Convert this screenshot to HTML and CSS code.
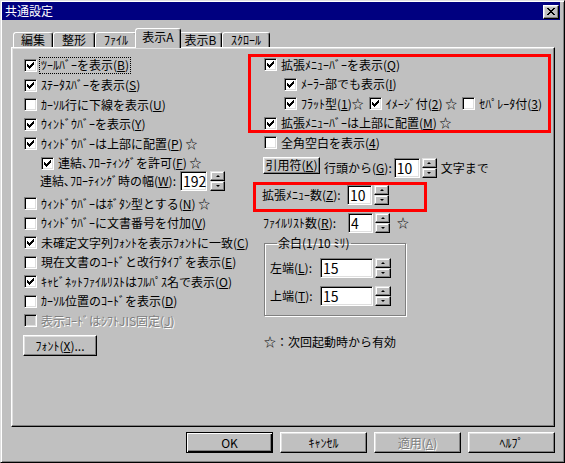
FILE: index.html
```html
<!DOCTYPE html>
<html lang="ja">

<head>
    <meta charset="UTF-8">
    <meta name="viewport" content="width=device-width, initial-scale=1.0">
    <title>共通設定</title>
    <link rel="stylesheet" href="styles.css">
</head>

<body>
    <svg class="defs">
        <symbol id="chk" viewBox="0 0 7 7">
            <path d="M0 2H1V3H2V4H3V3H4V2H5V1H6V0H7V3H6V4H5V5H4V6H3V7H2V6H1V5H0Z" />
        </symbol>
    </svg>
    <div class="dlg">
        <div class="title">
            <span>共通設定</span>
            <span class="close">
                <svg width="8" height="7" viewBox="0 0 8 7">
                    <path d="M0 0h2v1H0z M6 0h2v1H6z M1 1h2v1H1z M5 1h2v1H5z M2 2h4v1H2z M3 3h2v1H3z M2 4h4v1H2z M1 5h2v1H1z M5 5h2v1H5z M0 6h2v1H0z M6 6h2v1H6z" />
                </svg>
            </span>
        </div>

        <ul class="tabs">
            <li class="t1">編集</li>
            <li>整形</li>
            <li>ﾌｧｲﾙ</li>
            <li class="on">表示A</li>
            <li class="t5">表示B</li>
            <li class="t6">ｽｸﾛｰﾙ</li>
        </ul>

        <div class="panel">
            <!-- 左側 -->
            <div class="col-l">
                <div class="row"><span class="cb"><svg><use href="#chk" /></svg></span><span class="lbl focus">ﾂｰﾙﾊﾞｰを表示(<u>B</u>)</span></div>
                <div class="row"><span class="cb"><svg><use href="#chk" /></svg></span><span class="lbl">ｽﾃｰﾀｽﾊﾞｰを表示(<u>S</u>)</span></div>
                <div class="row"><span class="cb"></span><span class="lbl">ｶｰｿﾙ行に下線を表示(<u>U</u>)</span></div>
                <div class="row"><span class="cb"><svg><use href="#chk" /></svg></span><span class="lbl">ｳｨﾝﾄﾞｳﾊﾞｰを表示(<u>Y</u>)</span></div>
                <div class="row"><span class="cb"><svg><use href="#chk" /></svg></span><span class="lbl">ｳｨﾝﾄﾞｳﾊﾞｰは上部に配置(<u>P</u>) ☆</span></div>
                <div class="row ind"><span class="cb"><svg><use href="#chk" /></svg></span><span class="lbl">連結､ﾌﾛｰﾃｨﾝｸﾞを許可(<u>F</u>) ☆</span></div>
                <div class="wrow">
                    <span class="w-lbl">連結､ﾌﾛｰﾃｨﾝｸﾞ時の幅(<u>W</u>):</span>
                    <span class="edit e27">192</span>
                    <span class="spin"><i class="up"></i><i class="dn"></i></span>
                </div>
                <div class="row"><span class="cb"></span><span class="lbl">ｳｨﾝﾄﾞｳﾊﾞｰはﾎﾞﾀﾝ型とする(<u>N</u>) ☆</span></div>
                <div class="row"><span class="cb"></span><span class="lbl">ｳｨﾝﾄﾞｳﾊﾞｰに文書番号を付加(<u>V</u>)</span></div>
                <div class="row"><span class="cb"><svg><use href="#chk" /></svg></span><span class="lbl">未確定文字列ﾌｫﾝﾄを表示ﾌｫﾝﾄに一致(<u>C</u>)</span></div>
                <div class="row"><span class="cb"></span><span class="lbl">現在文書のｺｰﾄﾞと改行ﾀｲﾌﾟを表示(<u>E</u>)</span></div>
                <div class="row"><span class="cb"><svg><use href="#chk" /></svg></span><span class="lbl">ｷｬﾋﾞﾈｯﾄﾌｧｲﾙﾘｽﾄはﾌﾙﾊﾟｽ名で表示(<u>O</u>)</span></div>
                <div class="row"><span class="cb"></span><span class="lbl">ｶｰｿﾙ位置のｺｰﾄﾞを表示(<u>D</u>)</span></div>
                <div class="row"><span class="cb dis"></span><span class="lbl gray">表示ｺｰﾄﾞはｼﾌﾄJIS固定(<u>J</u>)</span></div>
                <div class="btn font-btn">ﾌｫﾝﾄ(<u>X</u>)...</div>
            </div>

            <!-- 右側 -->
            <div class="col-r">
                <div class="red red1">
                    <div class="red-in">
                        <div class="row"><span class="cb"><svg><use href="#chk" /></svg></span><span class="lbl">拡張ﾒﾆｭｰﾊﾞｰを表示(<u>Q</u>)</span></div>
                        <div class="row ind2"><span class="cb"><svg><use href="#chk" /></svg></span><span class="lbl">ﾒｰﾗｰ部でも表示(<u>I</u>)</span></div>
                        <div class="row ind2">
                            <span class="cb"><svg><use href="#chk" /></svg></span><span class="lbl sp">ﾌﾗｯﾄ型(<u>1</u>)☆</span>
                            <span class="cb"><svg><use href="#chk" /></svg></span><span class="lbl sp">ｲﾒｰｼﾞ付(<u>2</u>) ☆</span>
                            <span class="cb"></span><span class="lbl">ｾﾊﾟﾚｰﾀ付(<u>3</u>)</span>
                        </div>
                        <div class="row"><span class="cb"><svg><use href="#chk" /></svg></span><span class="lbl">拡張ﾒﾆｭｰﾊﾞｰは上部に配置(<u>M</u>) ☆</span></div>
                    </div>
                </div>

                <div class="row sub"><span class="cb"></span><span class="lbl">全角空白を表示(<u>4</u>)</span></div>

                <div class="qrow sub">
                    <span class="btn q-btn">引用符(<u>K</u>)</span>
                    <span class="q-lbl">行頭から(<u>G</u>):</span>
                    <span class="edit e26">10</span>
                    <span class="spin"><i class="up"></i><i class="dn"></i></span>
                    <span class="q-end">文字まで</span>
                </div>

                <div class="red red2">
                    <div class="nrow">
                        <span class="n-lbl">拡張ﾒﾆｭｰ数(<u>Z</u>):</span>
                        <span class="edit e25">10</span>
                        <span class="spin"><i class="up"></i><i class="dn"></i></span>
                    </div>
                </div>

                <div class="nrow sub frow">
                    <span class="n-lbl">ﾌｧｲﾙﾘｽﾄ数(<u>R</u>):</span>
                    <span class="edit e25">4</span>
                    <span class="spin"><i class="up"></i><i class="dn"></i></span>
                    <span class="star">☆</span>
                </div>

                <fieldset class="group">
                    <legend>余白(1/10 ﾐﾘ)</legend>
                    <div class="grow">
                        <span class="g-lbl">左端(<u>L</u>):</span>
                        <span class="edit e53">15</span>
                        <span class="spin s16"><i class="up"></i><i class="dn"></i></span>
                    </div>
                    <div class="grow">
                        <span class="g-lbl">上端(<u>T</u>):</span>
                        <span class="edit e53">15</span>
                        <span class="spin s16"><i class="up"></i><i class="dn"></i></span>
                    </div>
                </fieldset>

                <p class="note">☆：次回起動時から有効</p>
            </div>
        </div>

        <div class="btns">
            <span class="btn b-main def">OK</span>
            <span class="btn b-main">ｷｬﾝｾﾙ</span>
            <span class="btn b-main gray">適用(<u>A</u>)</span>
            <span class="btn b-main">ﾍﾙﾌﾟ</span>
        </div>
    </div>
</body>

</html>
```

FILE: styles.css
```css
* {
    margin: 0;
    padding: 0;
    box-sizing: border-box;
}

body {
    background-color: #c0c0c0;
    font-family: "Noto Sans CJK JP", sans-serif;
    font-size: 12px;
    line-height: 14px;
    color: #000;
}

.defs {
    width: 0;
    height: 0;
    display: block;
    overflow: hidden;
}

u {
    text-decoration: underline;
}

/* ウィンドウ枠 */
.dlg {
    width: 565px;
    height: 463px;
    border: 1px solid;
    border-color: #dfdfdf #000 #000 #dfdfdf;
    box-shadow: inset 1px 1px #fff, inset -1px -1px #808080;
    padding: 1px;
    display: flex;
    flex-direction: column;
}

.title {
    height: 18px;
    margin-right: 3px;
    background-color: #000080;
    color: #fff;
    display: flex;
    align-items: center;
    justify-content: space-between;
    padding: 0 1px 0 3px;
}

.close {
    width: 16px;
    height: 14px;
    margin-top: 1px;
    background-color: #c0c0c0;
    border: 1px solid;
    border-color: #fff #000 #000 #fff;
    box-shadow: inset -1px -1px #808080, inset 1px 1px #dfdfdf;
    display: flex;
    align-items: center;
    justify-content: center;
}

.close svg {
    display: block;
    fill: #000;
}

/* タブ */
.tabs {
    display: flex;
    align-items: flex-end;
    list-style: none;
    margin: 8px 0 0 11px;
}

.tabs li {
    width: 42px;
    height: 15px;
    text-align: center;
    border: 1px solid;
    border-bottom: 0;
    border-color: #fff #000 transparent #fff;
    border-radius: 3px 3px 0 0;
    box-shadow: inset -1px 0 #808080;
    background-color: #c0c0c0;
}

.tabs .t1 {
    width: 40px;
}

.tabs .t5 {
    width: 43px;
}

.tabs .t6 {
    width: 48px;
}

.tabs .on {
    width: 46px;
    height: 20px;
    padding-top: 1px;
    margin: 0 -2px -1px;
    position: relative;
    z-index: 1;
}

/* タブの中身 */
.panel {
    height: 380px;
    margin: 0 8px 0 9px;
    border: 1px solid;
    border-color: #fff #000 #000 #fff;
    box-shadow: inset -1px -1px #808080, inset 1px 1px #dfdfdf;
    padding: 6px 2px 0 12px;
    display: flex;
}

.col-l {
    width: 224px;
    margin-top: 2px;
}

.col-r {
    width: 303px;
}

.row {
    height: 19.5px;
    display: flex;
    align-items: center;
    white-space: nowrap;
}

.ind {
    padding-left: 17px;
}

.ind2 {
    padding-left: 20px;
}

.cb {
    flex: none;
    width: 13px;
    height: 13px;
    margin-right: 3px;
    background-color: #fff;
    border: 1px solid;
    border-color: #808080 #fff #fff #808080;
    box-shadow: inset 1px 1px #000, inset -1px -1px #dfdfdf;
    display: flex;
    align-items: center;
    justify-content: center;
}

.cb svg {
    width: 7px;
    height: 7px;
    display: block;
    fill: #000;
    shape-rendering: crispEdges;
}

.cb.dis {
    background-color: #c0c0c0;
}

.lbl {
    padding: 0 1px;
}

.lbl.sp {
    margin-right: 4px;
}

.focus {
    outline: 1px dotted #000;
    padding-bottom: 1px;
}

.gray {
    color: #808080;
    text-shadow: 1px 1px #fff;
}

/* エディット・スピン */
.edit {
    flex: none;
    height: 20px;
    background-color: #fff;
    border: 1px solid;
    border-color: #808080 #fff #fff #808080;
    box-shadow: inset 1px 1px #000, inset -1px -1px #dfdfdf;
    padding: 0 2px;
    font-size: 14px;
    line-height: 18px;
}

.e25 {
    width: 25px;
}

.e26 {
    width: 26px;
}

.e27 {
    width: 27px;
}

.e53 {
    width: 53px;
}

.spin {
    flex: none;
    width: 15px;
    height: 20px;
    margin-left: 2px;
    display: flex;
    flex-direction: column;
}

.spin.s16 {
    width: 16px;
}

.spin i {
    flex: 1;
    background-color: #c0c0c0;
    border: 1px solid;
    border-color: #dfdfdf #000 #000 #dfdfdf;
    box-shadow: inset -1px -1px #808080, inset 1px 1px #fff;
    display: flex;
    align-items: center;
    justify-content: center;
}

.spin i::after {
    content: "";
    border-left: 2px solid transparent;
    border-right: 2px solid transparent;
}

.spin .up::after {
    border-bottom: 2px solid #000;
}

.spin .dn::after {
    border-top: 2px solid #000;
}

/* ボタン */
.btn {
    display: flex;
    align-items: center;
    justify-content: center;
    background-color: #c0c0c0;
    border: 1px solid;
    border-color: #fff #000 #000 #fff;
    box-shadow: inset -1px -1px #808080, inset 1px 1px #dfdfdf;
    white-space: nowrap;
}

.font-btn {
    width: 74px;
    height: 21px;
    margin: 4.5px 0 0 -1px;
}

/* 左の幅指定 */
.wrow {
    height: 20px;
    margin: -2px 0 3px;
    padding-left: 16px;
    display: flex;
    align-items: center;
    white-space: nowrap;
}

.w-lbl {
    width: 140px;
}

.wrow .spin {
    margin-left: 3px;
}

/* 右側 */
.red {
    border: 3px solid #f00;
}

.red1 {
    padding-left: 13px;
}

.red-in {
    margin: -2px 0 -3px;
}

.sub {
    padding-left: 16px;
}

.qrow {
    height: 20px;
    margin-top: 5px;
    display: flex;
    align-items: center;
    white-space: nowrap;
    padding-left: 15px;
}

.q-btn {
    width: 57px;
    height: 17px;
    align-self: flex-start;
    margin-top: -1px;
}

.q-lbl {
    margin: 0 2px 0 4px;
}

.q-end {
    margin-left: 4px;
}

.red2 {
    width: 174px;
    margin: 4.5px 0 0 5px;
    padding: 0 0 4px 6px;
}

.nrow {
    height: 20px;
    display: flex;
    align-items: center;
    white-space: nowrap;
}

.n-lbl {
    width: 85px;
}

.frow {
    margin-top: 1px;
    padding-left: 15px;
}

.star {
    margin-left: 7px;
}

.group {
    width: 142px;
    margin: 3px 0 0 16px;
    border: 1px solid #808080;
    box-shadow: inset 1px 1px #fff, 1px 1px #fff;
    padding: 8px 0 9px 5px;
}

.group legend {
    margin-left: 7px;
    padding: 0 1px;
    line-height: 14px;
}

.grow {
    height: 20px;
    display: flex;
    align-items: center;
    white-space: nowrap;
}

.grow + .grow {
    margin-top: 8px;
}

.g-lbl {
    width: 50px;
}

.note {
    margin: 19px 0 0 16px;
}

/* 下のボタン */
.btns {
    display: flex;
    justify-content: flex-end;
    gap: 7px;
    margin: 5px 8px 0 0;
}

.b-main {
    width: 87px;
    height: 21px;
}

.btn.def {
    border-color: #000;
    box-shadow: inset 1px 1px #fff, inset -1px -1px #000, inset -2px -2px #808080;
}
```
